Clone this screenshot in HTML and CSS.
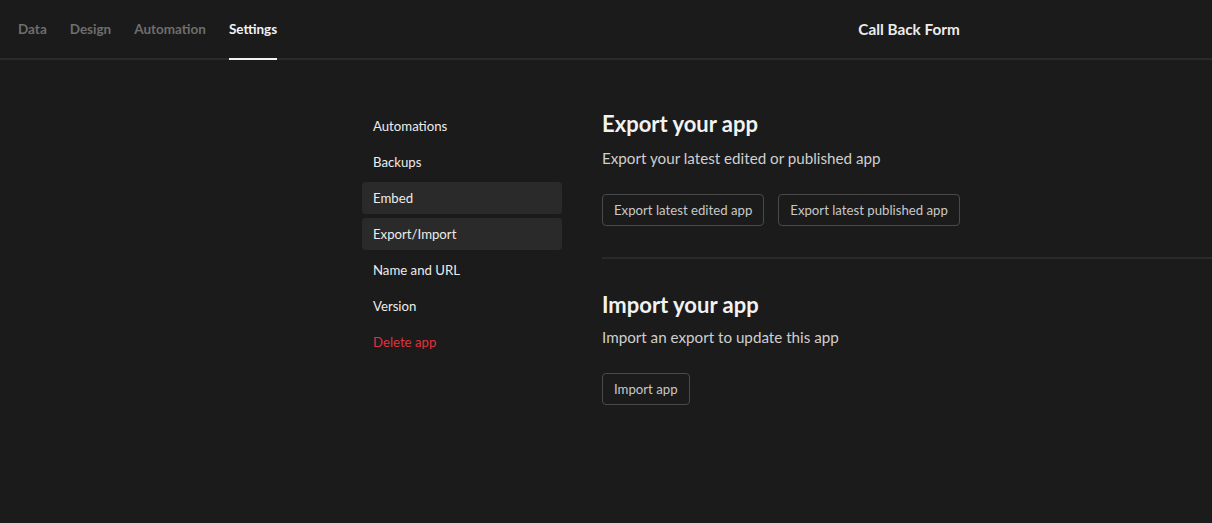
FILE: index.html
```html
<!DOCTYPE html>
<html>
<head>
<meta charset="utf-8">
<link rel="stylesheet" href="styles.css">
</head>
<body>
<header class="topbar">
  <nav class="tabs">
    <a class="tab">Data</a>
    <a class="tab">Design</a>
    <a class="tab">Automation</a>
    <a class="tab active">Settings</a>
  </nav>
  <div class="title-wrap"><span class="title">Call Back Form</span></div>
</header>
<main class="page">
  <aside class="sidenav">
    <div class="nav-item">Automations</div>
    <div class="nav-item">Backups</div>
    <div class="nav-item hl">Embed</div>
    <div class="nav-item hl">Export/Import</div>
    <div class="nav-item">Name and URL</div>
    <div class="nav-item">Version</div>
    <div class="nav-item danger">Delete app</div>
  </aside>
  <section class="content">
    <div class="block">
      <h2 class="heading">Export your app</h2>
      <p class="desc">Export your latest edited or published app</p>
      <div class="btns">
        <button class="btn">Export latest edited app</button>
        <button class="btn">Export latest published app</button>
      </div>
    </div>
    <hr class="divider">
    <div class="block">
      <h2 class="heading">Import your app</h2>
      <p class="desc">Import an export to update this app</p>
      <div class="btns">
        <button class="btn">Import app</button>
      </div>
    </div>
  </section>
</main>
</body>
</html>
```

FILE: styles.css
```css
* { box-sizing: border-box; }
html, body { margin: 0; padding: 0; }
body {
  background: #1b1b1b;
  color: #e6e6e6;
  font-family: Lato, "Noto Sans", sans-serif;
  width: 1212px;
  height: 523px;
  overflow: hidden;
}
.topbar {
  display: grid;
  grid-template-columns: 1fr 1fr;
  height: 60px;
  border-bottom: 2px solid #2a2a2a;
}
.tabs {
  display: flex;
  gap: 23px;
  padding-left: 18px;
  align-items: stretch;
}
.tab {
  display: flex;
  align-items: center;
  font-size: 13.5px;
  font-weight: 700;
  color: #6e6e6e;
  border-bottom: 2px solid transparent;
  margin-bottom: -2px;
}
.tab.active {
  color: #f2f2f2;
  border-bottom-color: #f2f2f2;
}
.title-wrap {
  display: flex;
  align-items: center;
  justify-content: center;
}
.title {
  font-size: 15.3px;
  font-weight: 700;
  color: #ececec;
}
.page {
  display: flex;
  padding-left: 362px;
  padding-top: 50px;
  gap: 40px;
}
.sidenav {
  width: 200px;
  display: flex;
  flex-direction: column;
  gap: 4px;
}
.nav-item {
  height: 32px;
  line-height: 32px;
  padding-left: 11px;
  font-size: 13.2px;
  color: #ececec;
  border-radius: 4px;
}
.nav-item.hl { background: #2a2a2a; }
.nav-item.danger { color: #e0323d; }
.content {
  flex: 1;
  display: flex;
  flex-direction: column;
}
.heading {
  margin: 1px 0 0;
  font-size: 22px;
  font-weight: 700;
  color: #f2f2f2;
  line-height: 26px;
}
.desc {
  margin: 11px 0 0;
  font-size: 15.2px;
  line-height: 20px;
  color: #cfcfcf;
}
.btns {
  display: flex;
  gap: 14px;
  margin-top: 26px;
}
.btn {
  height: 32px;
  padding: 0 11px;
  background: transparent;
  border: 1px solid #4a4a4a;
  border-radius: 4px;
  color: #c8c8c8;
  font-family: inherit;
  font-size: 13.2px;
}
.divider {
  border: 0;
  border-top: 2px solid #2a2a2a;
  margin: 31px 0 32px;
  width: 100%;
}
.block + .divider + .block .desc { margin-top: 9px; }
```
